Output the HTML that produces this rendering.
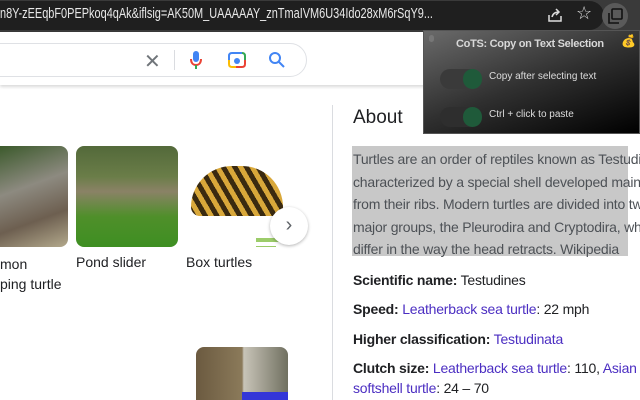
<!DOCTYPE html>
<html><head><style>
*{margin:0;padding:0;box-sizing:border-box}
body{width:640px;height:400px;overflow:hidden;background:#fff;font-family:"Liberation Sans",sans-serif;position:relative}
.a{position:absolute}
.lk{color:#4b2ec2}
</style></head><body>
<div class="a" style="left:0;top:0;width:640px;height:32px;background:#3a3a3a"></div>
<div class="a" style="left:-20px;top:1px;width:624px;height:29px;background:#1f1f1f;border-radius:15px"></div>
<div class="a" style="left:0;top:6px;color:#e8e8e8;font-size:14.5px;white-space:nowrap;transform:scaleX(0.755);transform-origin:0 0">n8Y-zEEqbF0PEPkoq4qAk&amp;iflsig=AK50M_UAAAAAY_znTmaIVM6U34Ido28xM6rSqY9...</div>
<svg class="a" style="left:546px;top:6px" width="18" height="18" viewBox="0 0 18 18" fill="none" stroke="#ddd" stroke-width="1.5"><path d="M3 9v6h12v-5"/><path d="M6 11c1-4 4-5 7-5M10 3l3 3-3 3"/></svg>
<div class="a" style="left:576px;top:3px;color:#ddd;font-size:18px">☆</div>
<div class="a" style="left:602px;top:3px;width:26px;height:26px;border-radius:13px;background:#5a5a5a"></div>
<svg class="a" style="left:606px;top:7px" width="18" height="18" viewBox="0 0 18 18" fill="none" stroke="#111" stroke-width="1.6"><rect x="6" y="2" width="10" height="10" rx="1"/><path d="M3 6v10h10"/></svg>
<div class="a" style="left:0;top:32px;width:640px;height:53px;background:#fff;box-shadow:0 2px 3px rgba(0,0,0,.15)"></div>
<div class="a" style="left:-20px;top:43px;width:327px;height:34px;border:1px solid #dfe1e5;border-radius:17px"></div>
<div class="a" style="left:144px;top:49px;color:#70757a;font-size:20px">✕</div>
<div class="a" style="left:174px;top:50px;width:1px;height:20px;background:#dadce0"></div>
<svg class="a" style="left:189px;top:50px" width="14" height="22" viewBox="0 0 14 22"><rect x="4" y="1" width="6" height="11" rx="3" fill="#4285f4"/><path d="M2 9c0 4 2 6 5 6s5-2 5-6" stroke="#ea4335" stroke-width="2" fill="none"/><path d="M7 15v4" stroke="#34a853" stroke-width="2"/></svg>
<svg class="a" style="left:227px;top:51px" width="20" height="18" viewBox="0 0 20 18" fill="none" stroke-width="2"><path d="M2 9V5c0-2 1-3 3-3h10" stroke="#4285f4"/><path d="M15 2c2 0 3 1 3 3v4" stroke="#34a853"/><path d="M18 9v4c0 2-1 3-3 3H9" stroke="#ea4335"/><path d="M9 16H5c-2 0-3-1-3-3V9" stroke="#fbbc04"/><circle cx="10" cy="10" r="3" fill="#4285f4" stroke="none"/></svg>
<svg class="a" style="left:268px;top:51px" width="18" height="18" viewBox="0 0 18 18" fill="none" stroke="#4285f4" stroke-width="2"><circle cx="7" cy="7" r="5"/><path d="M11 11l5 5"/></svg>
<div class="a" style="left:332px;top:105px;width:1px;height:295px;background:#dadce0"></div>
<div class="a" style="left:353px;top:107px;font-size:19px;color:#202124">About</div>
<div class="a" style="left:0;top:146px;width:68px;height:101px;border-radius:0 8px 8px 0;background:linear-gradient(160deg,#3c5a2c,#8d8a80 40%,#6d5f50 70%,#b3a98c)"></div>
<div class="a" style="left:76px;top:146px;width:102px;height:101px;border-radius:8px;background:linear-gradient(180deg,#53693a 0%,#6a7d48 30%,#8a8266 45%,#4f8f2a 70%,#3e8f22)"></div>
<div class="a" style="left:186px;top:146px;width:102px;height:101px;border-radius:8px;background:#fff;overflow:hidden"><div class="a" style="left:5px;top:20px;width:92px;height:50px;border-radius:46px 46px 10px 10px;background:repeating-linear-gradient(60deg,#3a2a10 0 5px,#d9a83a 5px 10px)"></div><div class="a" style="left:70px;top:92px;width:30px;height:4px;background:#9ccc6a"></div><div class="a" style="left:70px;top:100px;width:20px;height:4px;background:#9ccc6a"></div></div>
<div class="a" style="left:270px;top:207px;width:38px;height:38px;border-radius:19px;background:#fff;box-shadow:0 1px 3px rgba(0,0,0,.3);text-align:center;line-height:36px;font-size:20px;color:#5f6368">›</div>
<div class="a" style="left:0;top:254px;font-size:14px;color:#202124;line-height:20px">mon<br>ping turtle</div>
<div class="a" style="left:76px;top:254px;font-size:14px;color:#202124">Pond slider</div>
<div class="a" style="left:186px;top:254px;font-size:14px;color:#202124">Box turtles</div>
<div class="a" style="left:196px;top:347px;width:92px;height:53px;border-radius:8px 8px 0 0;background:linear-gradient(90deg,#6b5a40,#8b7a5a 50%,#c8c4b8 52%,#707060);overflow:hidden"><div class="a" style="left:46px;top:45px;width:46px;height:10px;background:#3436d8"></div></div>
<div class="a" style="left:352px;top:146px;width:276px;height:110px;background:#c8c8c8"></div>
<div class="a" style="left:353px;top:148px;width:287px;overflow:hidden;font-size:14px;letter-spacing:-0.2px;line-height:22.6px;color:#4d5156;white-space:nowrap">Turtles are an order of reptiles known as Testudines<br>characterized by a special shell developed mainly<br>from their ribs. Modern turtles are divided into two<br>major groups, the Pleurodira and Cryptodira, which<br>differ in the way the head retracts. Wikipedia</div>
<div class="a" style="left:353px;top:266px;width:287px;overflow:hidden;font-size:14px;letter-spacing:-0.2px;color:#202124;white-space:nowrap;line-height:29.3px"><b>Scientific name:</b> Testudines<br><b>Speed:</b> <span class="lk">Leatherback sea turtle</span>: 22 mph<br><b>Higher classification:</b> <span class="lk">Testudinata</span><br><b>Clutch size:</b> <span class="lk">Leatherback sea turtle</span>: 110, <span class="lk">Asian</span></div>
<div class="a" style="left:353px;top:380px;font-size:14px;letter-spacing:-0.2px;color:#202124"><span class="lk">softshell turtle</span>: 24 – 70</div>
<div class="a" style="left:423px;top:30px;width:217px;height:104px;background:linear-gradient(160deg,#6a6a6a,#303030 50%,#000);border:1px solid #555"></div>
<div class="a" style="left:429px;top:35px;width:5px;height:7px;border-radius:3px;background:#777"></div>
<div class="a" style="left:456px;top:38px;font-size:11px;letter-spacing:-0.3px;font-weight:bold;color:#d8d8d8">CoTS: Copy on Text Selection</div>
<div class="a" style="left:621px;top:34px;font-size:12px">💰</div>
<div class="a" style="left:440px;top:69px;width:40px;height:20px;border-radius:10px;background:#3a3a3a"></div>
<div class="a" style="left:463px;top:69px;width:19px;height:20px;border-radius:10px;background:#1f5a3a"></div>
<div class="a" style="left:489px;top:71px;font-size:10px;color:#ddd">Copy after selecting text</div>
<div class="a" style="left:440px;top:107px;width:40px;height:20px;border-radius:10px;background:#2e2e2e"></div>
<div class="a" style="left:463px;top:107px;width:19px;height:20px;border-radius:10px;background:#1f5a3a"></div>
<div class="a" style="left:489px;top:109px;font-size:10px;color:#ddd">Ctrl + click to paste</div>
</body></html>
